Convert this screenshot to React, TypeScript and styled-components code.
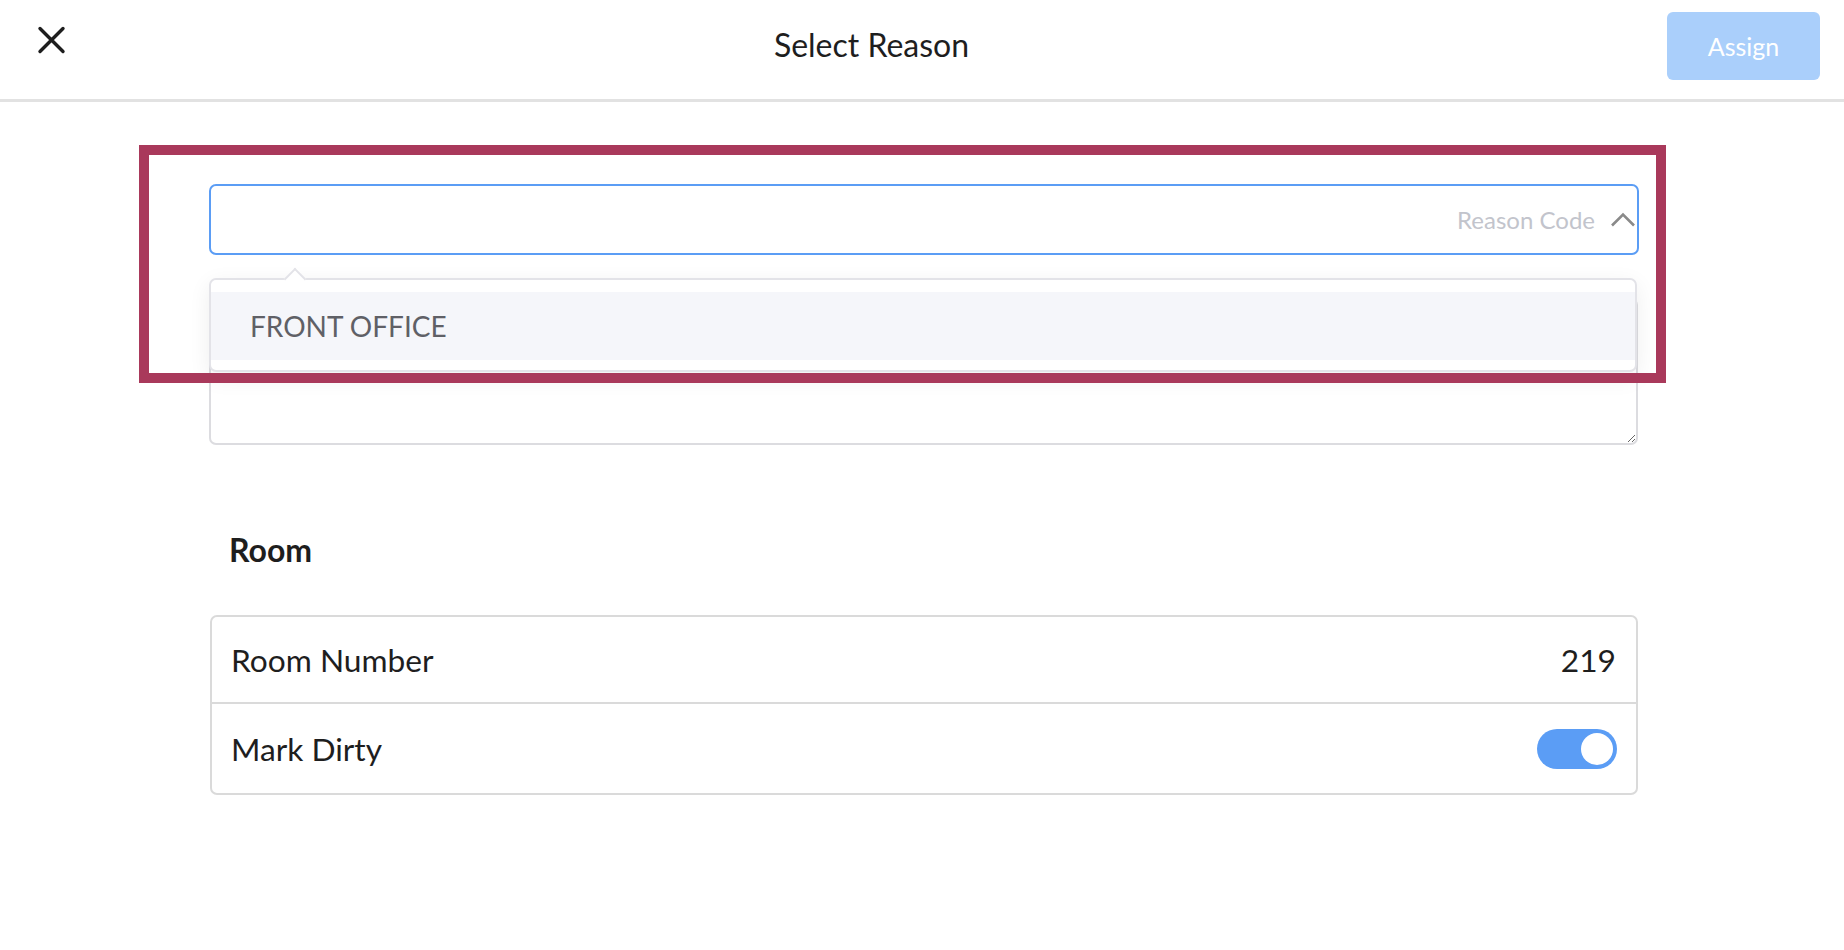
import React from "react";
import styled, { createGlobalStyle } from "styled-components";

const GlobalStyle = createGlobalStyle`
  html, body { margin: 0; padding: 0; background: #ffffff; }
  body { font-family: Lato, "Noto Sans", sans-serif; color: #1e1e1e; }
  * { box-sizing: border-box; }
`;

const Page = styled.div`
  position: relative;
  width: 100%;
  min-height: 950px;
  background: #ffffff;
`;

const Header = styled.header`
  display: flex;
  align-items: flex-start;
  height: 102px;
  padding: 0 24px 0 37px;
  border-bottom: 3px solid #e2e2e2;
`;

const CloseButton = styled.button`
  margin-top: 26px;
  width: 29px;
  height: 28px;
  padding: 0;
  border: none;
  background: transparent;
  display: flex;
  align-items: center;
  justify-content: center;
  cursor: pointer;
`;

const Title = styled.h1`
  flex: 1;
  margin: 27px 0 0;
  padding-left: 10px;
  text-align: center;
  font-size: 32px;
  line-height: 36px;
  font-weight: 400;
  color: #1e1e1e;
`;

const AssignButton = styled.button`
  margin-top: 12px;
  width: 153px;
  height: 68px;
  border: none;
  border-radius: 6px;
  background: #aacffb;
  color: #ffffff;
  font-family: Lato, sans-serif;
  font-size: 25px;
  cursor: pointer;
`;

const Content = styled.main`
  width: 1430px;
  margin: 0 205px 0 209px;
  padding-top: 82px;
  display: flex;
  flex-direction: column;
`;

const SelectWrap = styled.div`
  position: relative;
`;

const SelectBox = styled.div`
  height: 71px;
  border: 2px solid #5b9df5;
  border-radius: 7px;
  display: flex;
  align-items: center;
  justify-content: flex-end;
  padding-right: 1px;
  gap: 15px;
`;

const Placeholder = styled.span`
  font-size: 24px;
  color: #c2c4cc;
`;

const Dropdown = styled.div`
  position: absolute;
  top: 94px;
  left: 0;
  width: 1428px;
  height: 94px;
  background: #ffffff;
  border: 2px solid #e3e3e8;
  border-radius: 7px;
  box-shadow: 0 6px 22px rgba(0, 0, 0, 0.07);
  padding: 12px 0 10px;
  z-index: 2;

  &::before {
    content: "";
    position: absolute;
    top: -9px;
    left: 76px;
    width: 14px;
    height: 14px;
    background: #ffffff;
    border-left: 2px solid #e3e3e8;
    border-top: 2px solid #e3e3e8;
    transform: rotate(45deg);
  }
`;

const Option = styled.div<{ $active?: boolean }>`
  height: 68px;
  display: flex;
  align-items: center;
  padding-left: 39px;
  background: ${(p) => (p.$active ? "#f5f6fa" : "transparent")};
  font-size: 28px;
  color: #5f6066;
  position: relative;
`;

const Notes = styled.textarea`
  margin-top: 43px;
  height: 147px;
  width: 1429px;
  border: 2px solid #dcdce0;
  border-radius: 7px;
  resize: vertical;
  font-family: Lato, sans-serif;
  font-size: 24px;
  outline: none;
`;

const SectionTitle = styled.h2`
  margin: 88px 0 0;
  padding-left: 20px;
  font-size: 32px;
  line-height: 34px;
  font-weight: 700;
  color: #1e1e1e;
`;

const Card = styled.div`
  margin-top: 48px;
  width: 1428px;
  border: 2px solid #dadada;
  border-radius: 7px;
  display: flex;
  flex-direction: column;
  margin-left: 1px;
`;

const Row = styled.div<{ $last?: boolean }>`
  height: ${(p) => (p.$last ? "89px" : "87px")};
  display: flex;
  align-items: center;
  justify-content: space-between;
  padding: 0 20px 0 19px;
  border-bottom: ${(p) => (p.$last ? "none" : "2px solid #dadada")};
  font-size: 31.7px;
  color: #1e1e1e;
`;

const Toggle = styled.div<{ $on?: boolean }>`
  width: 80px;
  height: 40px;
  border-radius: 20px;
  background: ${(p) => (p.$on ? "#5b9df5" : "#d6d6d6")};
  position: relative;
  margin-right: -1px;

  &::after {
    content: "";
    position: absolute;
    top: 4px;
    ${(p) => (p.$on ? "right: 4px;" : "left: 4px;")}
    width: 32px;
    height: 32px;
    border-radius: 50%;
    background: #ffffff;
  }
`;

const Highlight = styled.div`
  position: absolute;
  left: 139px;
  top: 145px;
  width: 1527px;
  height: 238px;
  border: 10px solid #a9395b;
  pointer-events: none;
  z-index: 5;
`;

export default function App() {
  return (
    <>
      <GlobalStyle />
      <Page>
        <Header>
          <CloseButton aria-label="Close">
            <svg width="29" height="28" viewBox="0 0 29 28">
              <path
                d="M3 2.5 L26 25.5 M26 2.5 L3 25.5"
                stroke="#1e1e1e"
                strokeWidth="3.4"
                strokeLinecap="round"
                fill="none"
              />
            </svg>
          </CloseButton>
          <Title>Select Reason</Title>
          <AssignButton>Assign</AssignButton>
        </Header>
        <Content>
          <SelectWrap>
            <SelectBox>
              <Placeholder>Reason Code</Placeholder>
              <svg width="26" height="15" viewBox="0 0 26 15">
                <path
                  d="M2 13.5 L13 2.5 L24 13.5"
                  stroke="#8a8a8a"
                  strokeWidth="2.6"
                  fill="none"
                />
              </svg>
            </SelectBox>
            <Dropdown>
              <Option $active>FRONT OFFICE</Option>
            </Dropdown>
          </SelectWrap>
          <Notes />
          <SectionTitle>Room</SectionTitle>
          <Card>
            <Row>
              <span>Room Number</span>
              <span>219</span>
            </Row>
            <Row $last>
              <span>Mark Dirty</span>
              <Toggle $on />
            </Row>
          </Card>
        </Content>
        <Highlight />
      </Page>
    </>
  );
}
